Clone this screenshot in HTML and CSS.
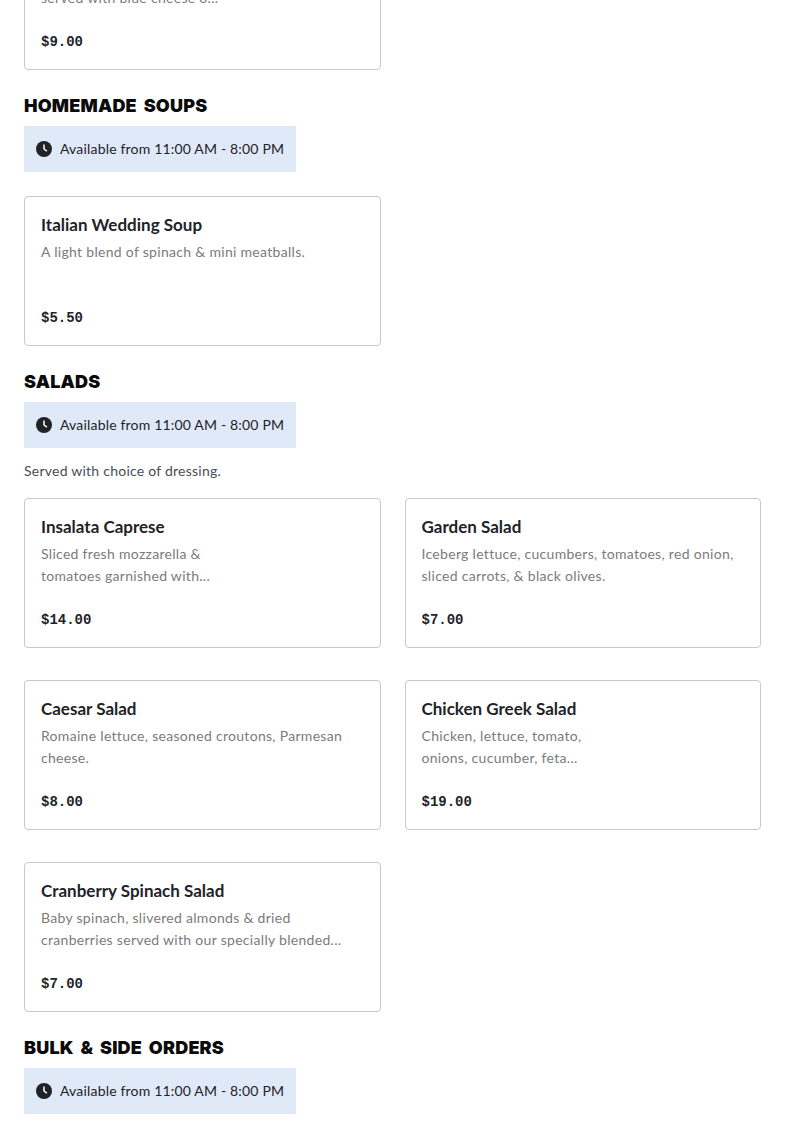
FILE: index.html
```html
<!DOCTYPE html>
<html lang="en">
<head>
    <meta charset="UTF-8">
    <meta name="viewport" content="width=device-width, initial-scale=1.0">
    <title>Menu</title>
    <link rel="stylesheet" href="styles.css">
</head>
<body>
    <div class="menu">
        <div class="items">
            <div class="item">
                <h3>&nbsp;</h3>
                <p>&nbsp;<br>served with blue cheese o...</p>
                <div class="price">$9.00</div>
            </div>
        </div>

        <h2>Homemade Soups</h2>
        <div class="hours">
            <svg viewBox="0 0 16 16" width="16" height="16"><circle cx="8" cy="8" r="8" fill="#1f2328"/><path d="M8 3.6V8l2.9 2.2" fill="none" stroke="#fff" stroke-width="1.5"/></svg>
            <span>Available from 11:00 AM - 8:00 PM</span>
        </div>
        <div class="items">
            <div class="item">
                <h3>Italian Wedding Soup</h3>
                <p>A light blend of spinach &amp; mini meatballs.</p>
                <div class="price">$5.50</div>
            </div>
        </div>

        <h2>Salads</h2>
        <div class="hours">
            <svg viewBox="0 0 16 16" width="16" height="16"><circle cx="8" cy="8" r="8" fill="#1f2328"/><path d="M8 3.6V8l2.9 2.2" fill="none" stroke="#fff" stroke-width="1.5"/></svg>
            <span>Available from 11:00 AM - 8:00 PM</span>
        </div>
        <p class="note">Served with choice of dressing.</p>
        <div class="items">
            <div class="item">
                <h3>Insalata Caprese</h3>
                <p>Sliced fresh mozzarella &amp;<br>tomatoes garnished with...</p>
                <div class="price">$14.00</div>
            </div>
            <div class="item">
                <h3>Garden Salad</h3>
                <p>Iceberg lettuce, cucumbers, tomatoes, red onion, sliced carrots, &amp; black olives.</p>
                <div class="price">$7.00</div>
            </div>
            <div class="item">
                <h3>Caesar Salad</h3>
                <p>Romaine lettuce, seasoned croutons, Parmesan cheese.</p>
                <div class="price">$8.00</div>
            </div>
            <div class="item">
                <h3>Chicken Greek Salad</h3>
                <p>Chicken, lettuce, tomato,<br>onions, cucumber, feta...</p>
                <div class="price">$19.00</div>
            </div>
            <div class="item">
                <h3>Cranberry Spinach Salad</h3>
                <p>Baby spinach, slivered almonds &amp; dried<br>cranberries served with our specially blended...</p>
                <div class="price">$7.00</div>
            </div>
        </div>

        <h2>Bulk &amp; Side Orders</h2>
        <div class="hours">
            <svg viewBox="0 0 16 16" width="16" height="16"><circle cx="8" cy="8" r="8" fill="#1f2328"/><path d="M8 3.6V8l2.9 2.2" fill="none" stroke="#fff" stroke-width="1.5"/></svg>
            <span>Available from 11:00 AM - 8:00 PM</span>
        </div>
    </div>
</body>
</html>
```

FILE: styles.css
```css
html {
    height: 1124px;
    overflow: hidden;
}
body {
    margin: 0;
    background: white;
    color: #1f2328;
    font-family: "Lato", "Liberation Sans", sans-serif;
}
.menu {
    margin-top: -80px;
    padding: 0 24px;
}
h2 {
    margin: 24px 0 8px;
    font-family: "Inter", "Liberation Sans", sans-serif;
    font-size: 18px;
    line-height: 24px;
    font-weight: 900;
    letter-spacing: 0.2px;
    word-spacing: 3px;
    text-transform: uppercase;
    color: #0b0b0b;
}
.hours {
    display: flex;
    align-items: center;
    gap: 8px;
    width: 272px;
    height: 46px;
    padding: 0 12px;
    box-sizing: border-box;
    background: #dfe9f8;
    font-size: 14px;
    letter-spacing: 0.18px;
    white-space: nowrap;
}
.hours svg {
    flex: none;
}
.hours span {
    padding-bottom: 2px;
}
.hours + .items {
    margin-top: 24px;
}
.note {
    margin: 12px 0 16px;
    font-size: 14px;
    line-height: 22px;
    letter-spacing: 0.24px;
    color: #4a4d52;
}
.items {
    display: grid;
    grid-template-columns: 1fr 1fr;
    column-gap: 24px;
    row-gap: 32px;
}
.item {
    height: 150px;
    padding: 16px;
    box-sizing: border-box;
    border: 1px solid #c8c8c8;
    border-radius: 4px;
    background: white;
}
.item h3 {
    margin: 0 0 4px;
    font-size: 17px;
    line-height: 24px;
    font-weight: 700;
}
.item p {
    height: 44px;
    margin: 0 0 22px;
    font-size: 14px;
    line-height: 22px;
    letter-spacing: 0.3px;
    color: #7b7b7b;
}
.price {
    font-family: "Liberation Mono", monospace;
    font-size: 14px;
    line-height: 22px;
    font-weight: bold;
    color: #1f2328;
}
```
